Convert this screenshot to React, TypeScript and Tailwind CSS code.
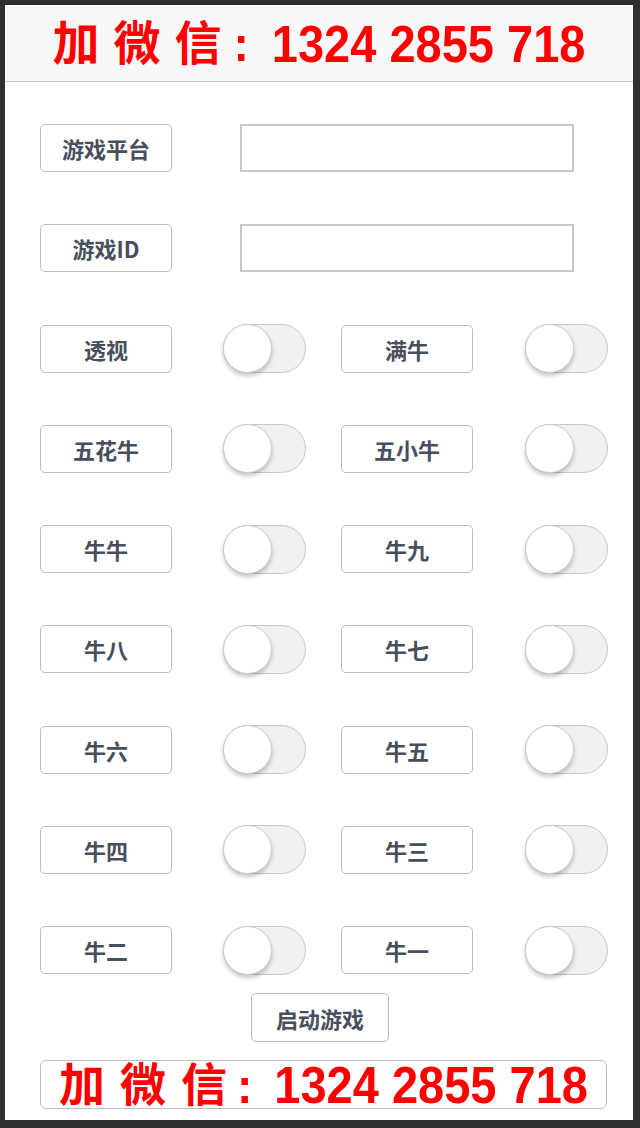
import React from "react";

const cjk = { fontFamily: '"Noto Sans CJK SC", "Noto Sans", sans-serif' };
const banner = { fontFamily: '"Liberation Sans", "Noto Sans CJK SC", sans-serif' };

function Label({ text, wide }: { text: string; wide?: boolean }) {
  return (
    <div
      className={
        (wide ? "w-[138px] h-[49px] " : "w-[132px] h-[48px] ") +
        "shrink-0 border border-[#bdbdbd] rounded-[5px] bg-white flex items-center justify-center text-[22px] font-bold text-[#474e5c] leading-none"
      }
      style={cjk}
    >
      {text}
    </div>
  );
}

function Toggle() {
  return (
    <div className="relative w-[83px] h-[49px] shrink-0 rounded-full border border-[#c8c8c8] bg-[#f1f1f1]">
      <div className="absolute left-[-1px] top-[-1px] w-[49px] h-[49px] rounded-full bg-white border border-[#cccccc] shadow-[0_3px_4px_rgba(0,0,0,0.22)]" />
    </div>
  );
}

function Banner({ size }: { size: "top" | "bottom" }) {
  const big = size === "bottom";
  return (
    <div className="flex items-center text-[#ff0000] font-bold leading-none whitespace-pre" style={banner}>
      <span
        className={(big ? "text-[46px]" : "text-[47px]") + " inline-block -translate-y-[4px]"}
        style={cjk}
      >
        <span className={big ? "mr-[15px]" : "mr-[14px]"}>加</span>
        <span className={big ? "mr-[15px]" : "mr-[14px]"}>微</span>
        <span>信</span>
      </span>
      <span className={(big ? "ml-[10px] mr-[22px]" : "ml-[12px] mr-[23px]") + " text-[46px] inline-block scale-y-110"}>
        :
      </span>
      <span className="text-[47px] inline-block scale-y-110">1324 2855 718</span>
    </div>
  );
}

const pairs: [string, string][] = [
  ["透视", "满牛"],
  ["五花牛", "五小牛"],
  ["牛牛", "牛九"],
  ["牛八", "牛七"],
  ["牛六", "牛五"],
  ["牛四", "牛三"],
  ["牛二", "牛一"],
];

export default function App() {
  return (
    <div className="w-[640px] h-[1128px] bg-[#2f2f2f] pt-[5px] pl-[5px] pr-[7px] pb-[8px]">
      <div className="w-full h-full bg-white flex flex-col">
        <div className="h-[77px] shrink-0 bg-[#f8f8f8] border-b border-[#c8c8c8] flex items-center justify-center">
          <Banner size="top" />
        </div>
        <div className="flex flex-col gap-[52.25px] pt-[42px] pl-[35px]">
          <div className="flex items-center h-[48px]">
            <Label text="游戏平台" />
            <div className="ml-[68px] w-[334px] h-[48px] border-2 border-[#c8c8c8] bg-white" />
          </div>
          <div className="flex items-center h-[48px]">
            <Label text="游戏ID" />
            <div className="ml-[68px] w-[334px] h-[48px] border-2 border-[#c8c8c8] bg-white" />
          </div>
          {pairs.map(([a, b]) => (
            <div key={a} className="flex items-center h-[48px]">
              <Label text={a} />
              <div className="ml-[51px]">
                <Toggle />
              </div>
              <div className="ml-[35px]">
                <Label text={b} />
              </div>
              <div className="ml-[52px]">
                <Toggle />
              </div>
            </div>
          ))}
        </div>
        <div className="flex justify-center mt-[19px] pl-[2px]">
          <Label text="启动游戏" wide />
        </div>
        <div className="mt-[18px] ml-[35px] w-[567px] h-[49px] border border-[#bdbdbd] rounded-[6px] bg-white flex items-center justify-center">
          <Banner size="bottom" />
        </div>
      </div>
    </div>
  );
}
